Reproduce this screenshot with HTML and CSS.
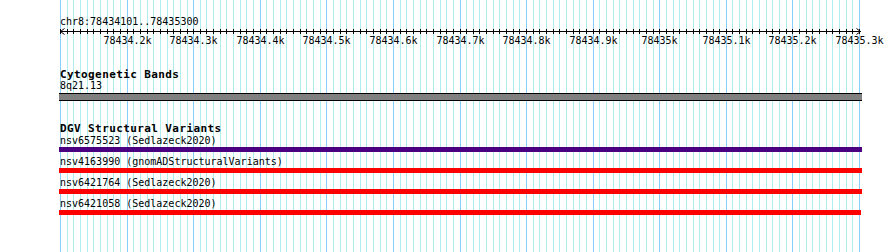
FILE: index.html
```html
<!DOCTYPE html>
<html lang="en">
<head>
    <meta charset="UTF-8">
    <title>chr8:78434101..78435300</title>
    <link rel="stylesheet" href="styles.css">
</head>
<body>
    <div class="browser">
        <svg class="grid" id="grid" width="890" height="252"></svg>

        <div class="tracks">
            <div class="locus">chr8:78434101..78435300</div>

            <svg class="ruler" id="ruler" width="890" height="20">
                <rect class="axis" x="60" y="3" width="801" height="1"></rect>
                <polyline class="arrow" points="64.5,0.5 60.5,3.5 64.5,6.5"></polyline>
                <polyline class="arrow" points="856.5,0.5 860.5,3.5 856.5,6.5"></polyline>
            </svg>

            <div class="track">
                <div class="track-title">Cytogenetic Bands</div>
                <div class="feature-label">8q21.13</div>
                <div class="band"></div>
            </div>

            <div class="track sv">
                <div class="track-title">DGV Structural Variants</div>
                <div class="features">
                    <div class="feature">
                        <div class="feature-label">nsv6575523 (Sedlazeck2020)</div>
                        <div class="bar loss"></div>
                    </div>
                    <div class="feature">
                        <div class="feature-label">nsv4163990 (gnomADStructuralVariants)</div>
                        <div class="bar gain"></div>
                    </div>
                    <div class="feature">
                        <div class="feature-label">nsv6421764 (Sedlazeck2020)</div>
                        <div class="bar gain"></div>
                    </div>
                    <div class="feature">
                        <div class="feature-label">nsv6421058 (Sedlazeck2020)</div>
                        <div class="bar gain short"></div>
                    </div>
                </div>
            </div>
        </div>
    </div>

    <script src="script.js"></script>
</body>
</html>
```

FILE: styles.css
```css
body {
    margin: 0;
    background: #fff;
    color: #000;
    font-family: "DejaVu Sans Mono", "Liberation Mono", monospace;
    font-size: 10px;
}

.browser {
    position: relative;
    width: 890px;
    height: 252px;
    overflow: hidden;
}

.grid {
    position: absolute;
    top: 0;
    left: 0;
}

.grid .minor { fill: #afeeee; }
.grid .major { fill: #87cefa; }

.tracks {
    position: relative;
}

.locus {
    margin-left: 60px;
    padding-top: 16px;
    line-height: 12px;
    height: 12px;
}

.ruler {
    display: block;
}

.ruler .axis,
.ruler .tick { fill: #000; }

.ruler .arrow {
    fill: none;
    stroke: #000;
    stroke-width: 1;
}

.ruler .tick-label {
    font-family: "DejaVu Sans Mono", "Liberation Mono", monospace;
    font-size: 10px;
    text-anchor: middle;
    fill: #000;
}

.track {
    margin-left: 59px;
    margin-top: 21px;
}

.track.sv {
    margin-top: 22px;
}

.track-title {
    margin-left: 1px;
    font-size: 11px;
    font-weight: bold;
    letter-spacing: 0.4px;
    line-height: 11px;
    height: 11px;
}

.feature-label {
    margin-left: 1px;
    line-height: 12px;
    height: 12px;
    white-space: nowrap;
}

.band {
    width: 803px;
    height: 6px;
    margin-top: 1px;
    background: #808080;
    border-top: 1px solid #000;
    border-bottom: 1px solid #000;
}

.features {
    margin-top: 1px;
}

.bar {
    width: 803px;
    height: 5px;
    margin-bottom: 4px;
}

.bar.short { width: 802px; }
.bar.loss { background: #4b0082; }
.bar.gain { background: #ff0000; }
```

FILE: script.js
```js
const NS = 'http://www.w3.org/2000/svg';
const START = 78434100;
const END = 78435300;
const LEFT = 60;
const WIDTH = 799;

function toX(bp) {
    return Math.round(LEFT + (bp - START) * WIDTH / (END - START));
}

function add(parent, tag, attrs) {
    const el = document.createElementNS(NS, tag);
    for (const k in attrs) el.setAttribute(k, attrs[k]);
    parent.appendChild(el);
    return el;
}

const grid = document.getElementById('grid');
const ruler = document.getElementById('ruler');

// grid lines every 10bp, labels every 100bp
for (let bp = START; bp <= END; bp += 10) {
    const x = toX(bp);
    const major = (bp - START) % 100 === 0;
    add(grid, 'rect', { x: x, y: 0, width: 1, height: 252, class: major ? 'major' : 'minor' });
    add(ruler, 'rect', { x: x, y: 1, width: 1, height: 5, class: 'tick' });
    if (major && bp > START) {
        const label = add(ruler, 'text', { x: x + 0.5, y: 16, class: 'tick-label' });
        label.textContent = (bp / 1000) + 'k';
    }
}
```
